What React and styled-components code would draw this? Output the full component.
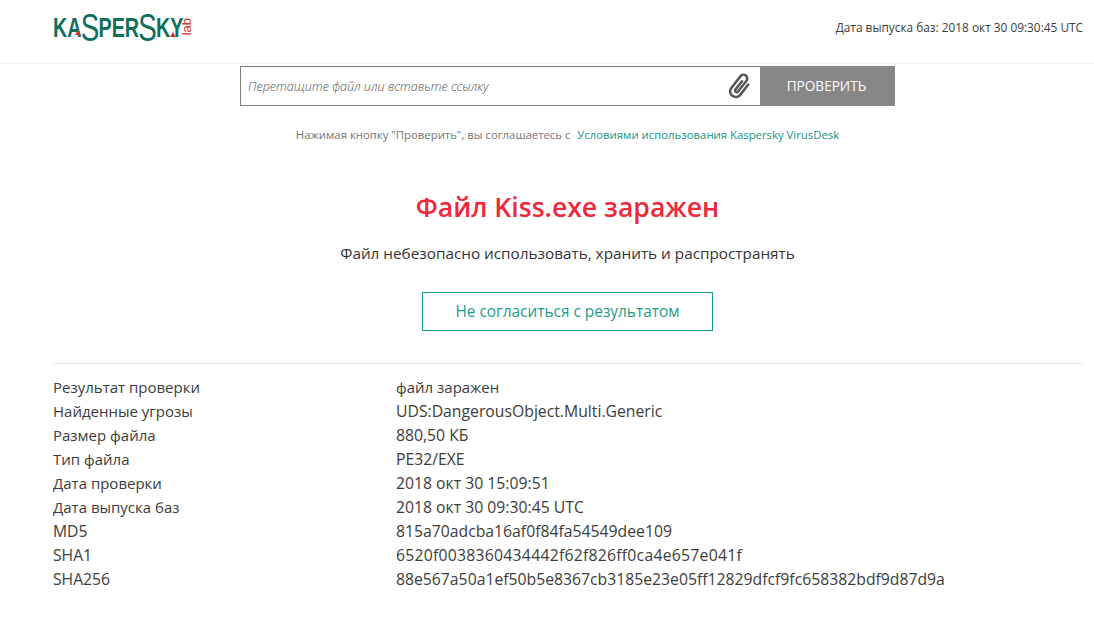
import React from 'react';
import styled, { createGlobalStyle } from 'styled-components';

const GlobalStyle = createGlobalStyle`
  html, body { margin: 0; padding: 0; background: #fff; }
  body { font-family: "Open Sans", "Noto Sans", sans-serif; color: #3c3c3c; }
`;

const Page = styled.div`
  width: 1094px;
  height: 630px;
  overflow: hidden;
`;

const Header = styled.header`
  height: 64px;
  box-sizing: border-box;
  border-bottom: 1px solid #f0f0f0;
  padding: 0 11px 0 53px;
  display: flex;
  align-items: center;
  justify-content: space-between;
`;

const Logo = styled.div`
  position: relative;
  width: 140px;
  height: 30px;
  margin-top: -7px;
  display: flex;
  align-items: center;
`;

const Wordmark = styled.div`
  display: flex;
  align-items: center;
  width: 125px;
  font-family: "Liberation Sans", sans-serif;
  font-size: 27px;
  font-weight: 700;
  line-height: 30px;
  color: #0f6f5c;
  transform: scaleX(0.73);
  transform-origin: left center;
  white-space: nowrap;
`;

const TallS = styled.span`
  font-size: 38px;
  font-weight: 400;
  margin: 0 -1px;
`;

const Spark = styled.i`
  position: absolute;
  left: ${p => p.$x}px;
  top: ${p => p.$y}px;
  width: 0;
  height: 0;
  border-left: 3px solid transparent;
  border-right: 3px solid transparent;
  border-bottom: 5px solid #d8322a;
`;

const LabMark = styled.span`
  position: absolute;
  left: 127px;
  top: 5px;
  font-family: "Liberation Sans", sans-serif;
  font-size: 13px;
  line-height: 13px;
  color: #d8322a;
  writing-mode: vertical-rl;
  transform: rotate(180deg);
`;

const BaseDate = styled.div`
  font-size: 11.85px;
  color: #3c3c3c;
  margin-top: -10px;
`;

const Main = styled.main`
  padding: 0 12px 0 53px;
`;

const Form = styled.form`
  width: 655px;
  height: 40px;
  margin: 2px auto 0;
  display: flex;
`;

const Field = styled.div`
  flex: 1;
  box-sizing: border-box;
  border: 1px solid #808080;
  border-right: 0;
  padding: 0 5px 0 7px;
  display: flex;
  align-items: center;
  justify-content: space-between;
`;

const Placeholder = styled.span`
  font-size: 12.6px;
  font-style: italic;
  font-weight: 300;
  color: #555;
`;

const Submit = styled.button`
  width: 135px;
  border: 0;
  padding: 0 2px 2px 0;
  background: #878787;
  color: #fff;
  font: inherit;
  font-size: 13.6px;
`;

const Terms = styled.p`
  margin: 20px 0 0;
  height: 17px;
  line-height: 17px;
  text-align: center;
  font-size: 11.35px;
  color: #757575;
`;

const TermsLink = styled.a`
  color: #15947f;
  margin-left: 4px;
`;

const Verdict = styled.section`
  display: flex;
  flex-direction: column;
  align-items: center;
`;

const Title = styled.h1`
  margin: 46px 0 0;
  font-size: 26.6px;
  line-height: 36px;
  font-weight: 600;
  color: #f0283c;
`;

const Subtitle = styled.p`
  margin: 17px 0 0;
  font-size: 15.3px;
  line-height: 22px;
  color: #333;
`;

const Dispute = styled.button`
  margin-top: 28px;
  width: 291px;
  height: 39px;
  background: #fff;
  border: 1px solid #14a088;
  color: #1f9c87;
  font: inherit;
  font-size: 15.4px;
`;

const Details = styled.dl`
  margin: 32px -1px 0 0;
  padding-top: 11px;
  border-top: 1px solid #e4e4e4;
  display: grid;
  grid-template-columns: 343px 1fr;
  grid-auto-rows: 24px;
  font-size: 15px;
  line-height: 24px;
  color: #3c3c3c;
`;

const Term = styled.dt`
  margin: 0;
  font-size: ${p => (p.$latin ? '15.7px' : '15px')};
`;

const Value = styled.dd`
  margin: 0;
  font-size: ${p => (p.$narrow ? '15px' : '15.75px')};
  letter-spacing: ${p => p.$track || 0}px;
`;

const rows = [
  { term: 'Результат проверки', value: 'файл заражен', narrow: true },
  { term: 'Найденные угрозы', value: 'UDS:DangerousObject.Multi.Generic' },
  { term: 'Размер файла', value: '880,50 КБ' },
  { term: 'Тип файла', value: 'PE32/EXE' },
  { term: 'Дата проверки', value: '2018 окт 30 15:09:51' },
  { term: 'Дата выпуска баз', value: '2018 окт 30 09:30:45 UTC' },
  { term: 'MD5', value: '815a70adcba16af0f84fa54549dee109', latin: true },
  { term: 'SHA1', value: '6520f0038360434442f62f826ff0ca4e657e041f', latin: true, track: 0.25 },
  { term: 'SHA256', value: '88e567a50a1ef50b5e8367cb3185e23e05ff12829dfcf9fc658382bdf9d87d9a', latin: true },
];

function Paperclip() {
  return (
    <svg width="30" height="30" viewBox="0 0 24 24" fill="none" stroke="#555" strokeWidth="2" strokeLinecap="round" strokeLinejoin="round">
      <path transform="rotate(38 12 12)" d="M16.5 7v10.5a4.5 4.5 0 0 1-9 0V5.5a3 3 0 0 1 6 0v11a1.3 1.3 0 0 1-2.6 0V8" />
    </svg>
  );
}

export default function App() {
  return (
    <Page>
      <GlobalStyle />
      <Header>
        <Logo>
          <Wordmark>
            KA<TallS>S</TallS>PER<TallS>S</TallS>KY
          </Wordmark>
          <Spark $x={22} $y={17} />
          <Spark $x={117} $y={19} />
          <LabMark>lab</LabMark>
        </Logo>
        <BaseDate>Дата выпуска баз: 2018 окт 30 09:30:45 UTC</BaseDate>
      </Header>
      <Main>
        <Form>
          <Field>
            <Placeholder>Перетащите файл или вставьте ссылку</Placeholder>
            <Paperclip />
          </Field>
          <Submit type="button">ПРОВЕРИТЬ</Submit>
        </Form>
        <Terms>
          Нажимая кнопку "Проверить", вы соглашаетесь с <TermsLink>Условиями использования Kaspersky VirusDesk</TermsLink>
        </Terms>
        <Verdict>
          <Title>Файл Kiss.exe заражен</Title>
          <Subtitle>Файл небезопасно использовать, хранить и распространять</Subtitle>
          <Dispute type="button">Не согласиться с результатом</Dispute>
        </Verdict>
        <Details>
          {rows.map(row => (
            <React.Fragment key={row.term}>
              <Term $latin={row.latin}>{row.term}</Term>
              <Value $narrow={row.narrow} $track={row.track}>{row.value}</Value>
            </React.Fragment>
          ))}
        </Details>
      </Main>
    </Page>
  );
}
